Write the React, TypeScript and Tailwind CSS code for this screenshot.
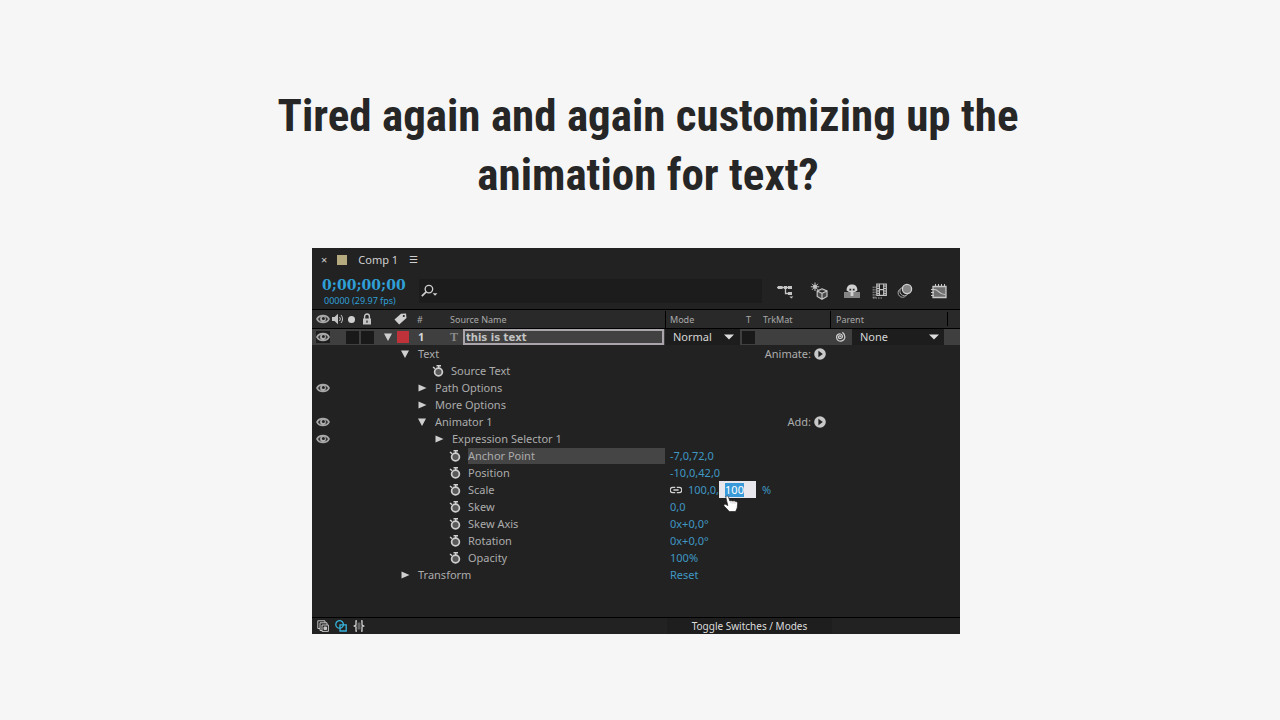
import { ReactNode } from 'react'

type Row = {
  label: string
  labelPad: string
  marker: 'open' | 'closed' | 'watch'
  eye?: boolean
  selected?: boolean
  action?: string
  value?: ReactNode
}

const valueClass = 'text-[#3f97c2] whitespace-pre'

function Value({ children }: { children: ReactNode }) {
  return <button className={valueClass}>{children}</button>
}

const rows: Row[] = [
  { label: 'Text', labelPad: 'pl-[88px]', marker: 'open', action: 'Animate:' },
  { label: 'Source Text', labelPad: 'pl-[121px]', marker: 'watch' },
  { label: 'Path Options', labelPad: 'pl-[105px]', marker: 'closed', eye: true },
  { label: 'More Options', labelPad: 'pl-[105px]', marker: 'closed' },
  { label: 'Animator 1', labelPad: 'pl-[105px]', marker: 'open', eye: true, action: 'Add:' },
  { label: 'Expression Selector 1', labelPad: 'pl-[122px]', marker: 'closed', eye: true },
  { label: 'Anchor Point', labelPad: 'pl-[138px]', marker: 'watch', selected: true, value: <Value>-7,0,72,0</Value> },
  { label: 'Position', labelPad: 'pl-[138px]', marker: 'watch', value: <Value>-10,0,42,0</Value> },
  { label: 'Scale', labelPad: 'pl-[138px]', marker: 'watch', value: <ScaleValue /> },
  { label: 'Skew', labelPad: 'pl-[138px]', marker: 'watch', value: <Value>0,0</Value> },
  { label: 'Skew Axis', labelPad: 'pl-[138px]', marker: 'watch', value: <Value>0x+0,0°</Value> },
  { label: 'Rotation', labelPad: 'pl-[138px]', marker: 'watch', value: <Value>0x+0,0°</Value> },
  { label: 'Opacity', labelPad: 'pl-[138px]', marker: 'watch', value: <Value>100%</Value> },
  { label: 'Transform', labelPad: 'pl-[88px]', marker: 'closed', value: <Value>Reset</Value> },
]

function EyeIcon() {
  return (
    <svg className="w-3.5 h-3 shrink-0" viewBox="0 0 14 12" fill="none">
      <path d="M1 6C3 1.4 11 1.4 13 6C11 10.6 3 10.6 1 6Z" fill="#333" stroke="#a8a8a8" strokeWidth="1.8" />
      <circle cx="7" cy="6" r="2.9" fill="#b0b0b0" />
      <circle cx="7.4" cy="5.4" r="1.5" fill="#222" />
    </svg>
  )
}

function StopwatchIcon() {
  return (
    <svg className="w-3 h-3 shrink-0" viewBox="0 0 12 12" fill="none">
      <circle cx="6.5" cy="7" r="3.9" fill="#5a5a5a" stroke="#cfcfcf" strokeWidth="1.7" />
      <path d="M4.5 .8H9M6.7 .8V3M1 2L3 3.6" stroke="#cfcfcf" strokeWidth="1.4" />
    </svg>
  )
}

function Triangle({ open }: { open?: boolean }) {
  return (
    <svg className="w-2.5 h-2.5 shrink-0" viewBox="0 0 10 10" fill="#cfcfcf">
      <path d={open ? 'M1 1.5H9L5 9Z' : 'M1.5 1.5L9.5 5L1.5 8.5Z'} />
    </svg>
  )
}

function DropArrow() {
  return (
    <svg className="w-2.5 h-1.5 shrink-0 pointer-events-none" viewBox="0 0 10 6" fill="#dcdcdc">
      <path d="M0 .5H10L5 5.5Z" />
    </svg>
  )
}

function PlayIcon() {
  return (
    <svg className="w-3 h-3 shrink-0" viewBox="0 0 12 12">
      <circle cx="6" cy="6" r="5.8" fill="#c8c8c8" />
      <path d="M4.4 2.8L8.8 6L4.4 9.2Z" fill="#222" />
    </svg>
  )
}

function HandCursor() {
  return (
    <svg className="absolute left-1 top-3.5 w-4 h-[18px] z-10 pointer-events-none" viewBox="0 0 16 18">
      <path
        d="M3 1.6C3.6.6 5 .6 5.4 1.8L6.8 6L8 5.4L9.6 6L11.2 5.8L13 6.6C14.2 6.8 14.8 7.6 14.6 9L14.2 13L12.6 16.5H6.2L4.6 14.6L1 11C.4 9.8 1.6 8.6 2.8 9.4L4.8 10.6L3 3Z"
        fill="#fff"
        stroke="#222"
        strokeWidth=".7"
      />
      <path d="M8 6V8.4M10 6.4V8.6M12 6.8V8.8" stroke="#999" strokeWidth=".5" />
    </svg>
  )
}

function ScaleValue() {
  return (
    <div className="flex items-center">
      <svg className="w-3 h-2 mr-1.5" viewBox="0 0 12 8" fill="none" stroke="#d0d0d0" strokeWidth="1.3">
        <path d="M5.2 1.4H2.8A2.2 2.2 0 0 0 2.8 6.6H5.2M6.8 1.4H9.2A2.2 2.2 0 0 1 9.2 6.6H6.8M3.4 4H8.6" />
      </svg>
      <Value>100,0,</Value>
      <div className="relative">
        <div className="flex h-[17px] w-[37px] items-center bg-[#e9e7ee] pl-1.5">
          <input
            aria-label="Scale Y"
            defaultValue="100"
            className="h-3.5 w-[19px] bg-[#3a9ad9] text-white outline-none"
          />
        </div>
        <HandCursor />
      </div>
      <span className="ml-1.5 text-[#3f97c2]">%</span>
    </div>
  )
}

function SearchIcon() {
  return (
    <svg className="w-5 h-4" viewBox="0 0 20 16" fill="none">
      <circle cx="10.5" cy="6" r="4" stroke="#d0d0d0" strokeWidth="1.4" />
      <path d="M7.6 9L3 13.4" stroke="#d0d0d0" strokeWidth="1.8" />
      <path d="M14.5 10.5H19.5L17 13Z" fill="#d0d0d0" />
    </svg>
  )
}

function FlowchartIcon() {
  return (
    <svg className="w-[18px] h-4" viewBox="0 0 18 16" fill="none" stroke="#c4c4c4">
      <path d="M1 4.5H16M9.5 4.5V10.5H15" strokeWidth="1.3" />
      <path d="M2 3H6.5V6H2ZM8 3H11V6H8ZM12 3H16V6H12ZM12 9H16V12H12Z" fill="#c4c4c4" stroke="none" />
      <path d="M13.4 13.4H17.4L15.4 15.6Z" fill="#c4c4c4" stroke="none" />
    </svg>
  )
}

function DraftCubeIcon() {
  return (
    <svg className="w-[18px] h-[18px]" viewBox="0 0 18 18" fill="none" stroke="#c4c4c4">
      <path d="M5 .5V9M.8 4.8H9.2M2 1.8L8 7.8M8 1.8L2 7.8" />
      <circle cx="5" cy="4.8" r="2" fill="#c4c4c4" stroke="none" />
      <path d="M12 6.8L17 9V14.4L12 17.2L7.2 14.4V9ZM7.2 9L12 11.4L17 9M12 11.4V17" fill="#4a4a4a" strokeWidth="1.2" />
    </svg>
  )
}

function ShyIcon() {
  return (
    <svg className="w-4 h-3.5" viewBox="0 0 16 14">
      <path d="M0 8H16V14H0Z" fill="#858585" />
      <path d="M2.6 6.4C2.6 2 5 .4 8 .4S13.4 2 13.4 6.4L11 8H9.4V12H6.6V8H5Z" fill="#d0d0d0" />
      <path d="M5.4 4.8H7.2V6.6H5.4ZM8.8 4.8H10.6V6.6H8.8Z" fill="#222" />
    </svg>
  )
}

function FrameBlendIcon() {
  return (
    <svg className="w-[15px] h-4" viewBox="0 0 15 16" fill="none" stroke="#c4c4c4">
      <path d="M4.8 1H14.3V12.4H4.8ZM7.4 1V12.4M11.7 1V12.4M7.4 6.7H11.7" strokeWidth="1.2" />
      <path d="M5 3H7M5 5.5H7M5 8H7M5 10.4H7M12 3H14M12 5.5H14M12 8H14M12 10.4H14" />
      <path d="M1.2 3.6V15.5M3 3.6V15.5M1 15H10" stroke="#a0a0a0" strokeDasharray="1.5 1" />
    </svg>
  )
}

function MotionBlurIcon() {
  return (
    <svg className="w-4 h-4" viewBox="0 0 16 16" stroke="#a8a8a8">
      <circle cx="5.6" cy="9.8" r="4.5" fill="#222" />
      <circle cx="7.4" cy="8.2" r="4.5" fill="#222" />
      <circle cx="10" cy="6" r="4.6" fill="#858585" stroke="#d0d0d0" strokeWidth="1.3" />
    </svg>
  )
}

function GraphIcon() {
  return (
    <svg className="w-4 h-4" viewBox="0 0 16 16" fill="none" stroke="#c8c8c8">
      <path d="M2 3.5H15V14.5H2Z" fill="#707070" strokeWidth="1.3" />
      <path d="M4.5 1V4M7.5 1V4M10.5 1V4M13.5 1V4M0 6.5H3M0 9.5H3M0 12.5H3" />
      <path d="M3 6.5C8 6.5 8 11.5 14 11.5" strokeWidth="1.2" />
    </svg>
  )
}

function SpeakerIcon() {
  return (
    <svg className="w-3 h-3" viewBox="0 0 12 12" fill="none">
      <path d="M0 4H2.5L6 .8V11.2L2.5 8H0Z" fill="#c4c4c4" />
      <path d="M7.5 4A3 3 0 0 1 7.5 8M9 2A6 6 0 0 1 9 10" stroke="#c4c4c4" />
    </svg>
  )
}

function LockIcon() {
  return (
    <svg className="w-2.5 h-3" viewBox="0 0 10 12" fill="none">
      <path d="M2.6 6V3.4A2.4 2.4 0 0 1 7.4 3.4V6" stroke="#c4c4c4" strokeWidth="1.4" />
      <path d="M1 5.5H9V11.5H1Z" fill="#c4c4c4" />
      <path d="M4.4 7.5H5.6V9.8H4.4Z" fill="#222" />
    </svg>
  )
}

function TagIcon() {
  return (
    <svg className="w-[13px] h-3" viewBox="0 0 13 12">
      <path d="M7 .8L12 .5L12.5 5L5.2 11.6L.5 6.6Z" fill="#d0d0d0" />
      <circle cx="9.8" cy="3" r="1.1" fill="#222" />
    </svg>
  )
}

function PickWhipIcon() {
  return (
    <svg className="w-3 h-3 shrink-0" viewBox="0 0 12 12" fill="none" stroke="#d0d0d0" strokeWidth="1.2">
      <path d="M7 5.8A1.3 1.3 0 1 0 6 7.4C7.8 7.6 8.8 6.2 8.4 4.8C7.8 2.8 5.4 2.4 3.8 3.6C2 5 2.2 8 4.2 9.4C6.4 10.8 9.6 9.8 10.6 7.4C11.2 5.2 10.4 2.8 8.4 1.2" />
    </svg>
  )
}

function Toolbar() {
  return (
    <div className="flex h-[39px] items-center border-b border-black pt-0.5">
      <div className="w-[107px] pt-0.5 pl-2.5 text-[#2f9fd6]">
        <div className="font-['DejaVu_Serif',serif] text-sm leading-4 font-bold">0;00;00;00</div>
        <div className="pl-0.5 text-[9px] leading-[15px]">00000 (29.97 fps)</div>
      </div>
      <label className="flex h-6 flex-1 items-center bg-[#1c1c1c]">
        <SearchIcon />
        <input aria-label="Search layers" className="w-full bg-transparent pl-2 text-gray-300 outline-none" />
      </label>
      <div className="flex w-[198px] items-center pl-3.5">
        <button aria-label="Mini-flowchart" className="mr-4"><FlowchartIcon /></button>
        <button aria-label="Draft 3D" className="mr-4"><DraftCubeIcon /></button>
        <button aria-label="Hide shy layers" className="mr-3"><ShyIcon /></button>
        <button aria-label="Frame blending" className="mr-2.5"><FrameBlendIcon /></button>
        <button aria-label="Motion blur" className="mr-[18px]"><MotionBlurIcon /></button>
        <button aria-label="Graph editor"><GraphIcon /></button>
      </div>
    </div>
  )
}

function ColumnHeader() {
  return (
    <div className="flex h-[19px] items-center border-b border-black bg-[#292929] text-[9px] text-[#a9a9a9]">
      <div className="flex w-[138px] items-center pl-1">
        <EyeIcon />
        <span className="ml-0.5"><SpeakerIcon /></span>
        <span className="ml-1 h-[7px] w-[7px] rounded-full bg-[#d0d0d0]" />
        <span className="ml-[7px]"><LockIcon /></span>
        <span className="ml-[22px]"><TagIcon /></span>
        <span className="ml-2.5">#</span>
      </div>
      <div className="flex-1">Source Name</div>
      <div className="w-[75px] border-l border-black pl-1">Mode</div>
      <div className="w-[18px] pl-1.5">T</div>
      <div className="w-[72px] pl-[5px]">TrkMat</div>
      <div className="w-[117px] border-l border-black pl-[5px]">Parent</div>
      <div className="h-3.5 w-[13px] border-l border-black" />
    </div>
  )
}

function LayerRow() {
  return (
    <div className="flex h-4 items-center bg-[#3f3f3f] leading-4 text-[#d6d6d6]">
      <div className="flex h-full w-[138px] items-center pl-1">
        <span className="flex bg-[#1d1d1d]"><EyeIcon /></span>
        <span className="ml-4 h-[13px] w-[13px] bg-[#191919]" />
        <span className="ml-0.5 h-[13px] w-[13px] bg-[#191919]" />
        <span className="ml-[9px] flex"><Triangle open /></span>
        <span className="ml-1 h-3 w-3 bg-[#c0323a]" />
        <span className="ml-[9px] font-bold">1</span>
      </div>
      <span className="w-[13px] font-['Liberation_Serif',serif] text-xs font-bold text-[#8c8c8c]">T</span>
      <input
        aria-label="Layer name"
        defaultValue="this is text"
        className="h-4 min-w-0 flex-1 border-2 border-[#aaa5aa] bg-[#414141] px-px font-['DejaVu_Sans',sans-serif] text-[10px] leading-3 font-bold text-[#c4c4c4] outline-none"
      />
      <div className="ml-px flex h-full w-[75px] items-center bg-[#1d1d1d] pr-1.5">
        <select aria-label="Mode" className="min-w-0 flex-1 appearance-none pl-2 outline-none">
          <option>Normal</option>
        </select>
        <DropArrow />
      </div>
      <div className="flex w-[18px] pl-0.5">
        <span className="h-[13px] w-[13px] bg-[#191919]" />
      </div>
      <div className="w-[72px]" />
      <div className="flex h-full w-[114px] items-center">
        <span className="flex w-[22px] pl-1"><PickWhipIcon /></span>
        <div className="flex h-full flex-1 items-center bg-[#1d1d1d] pr-[5px]">
          <select aria-label="Parent" className="min-w-0 flex-1 appearance-none pl-2 outline-none">
            <option>None</option>
          </select>
          <DropArrow />
        </div>
      </div>
      <div className="w-4" />
    </div>
  )
}

function PropertyRow({ row }: { row: Row }) {
  const watch = row.marker === 'watch'
  return (
    <div className="flex h-[17px] items-center">
      <div className="flex w-[18px] pl-1">{row.eye && <EyeIcon />}</div>
      <div className={`flex h-full flex-1 items-center ${row.labelPad}`}>
        {/* the marker hangs in the indent, left of the label */}
        <span className={`flex shrink-0 ${watch ? '-ml-[19px] w-[19px]' : '-ml-[18px] w-[18px]'}`}>
          {watch ? <StopwatchIcon /> : <Triangle open={row.marker === 'open'} />}
        </span>
        <span className={row.selected ? 'flex-1 bg-[#454545] leading-4' : ''}>{row.label}</span>
      </div>
      <div className="w-[295px] pl-[5px]">
        {row.value}
        {row.action && (
          <button className="flex w-[156px] items-center justify-end gap-[3px]">
            {row.action}
            <PlayIcon />
          </button>
        )}
      </div>
    </div>
  )
}

function Footer() {
  return (
    <footer className="flex h-[17px] items-center border-t border-black text-[10px] leading-4 text-[#dcdcdc]">
      <div className="flex flex-1 items-center gap-1.5 pl-[5px]">
        <button aria-label="Layer switches">
          <svg className="w-3 h-3" viewBox="0 0 12 12" fill="none" stroke="#c4c4c4">
            <path d="M3 8.5H.8V.8H8V3M5 10.5H3V2.8H10V5" />
            <path d="M5 5H11.4V11.4H5Z" fill="#222" />
            <path d="M7 7H9.5V9.5H7Z" fill="#c4c4c4" />
          </svg>
        </button>
        <button aria-label="Transfer controls">
          <svg className="w-3 h-3" viewBox="0 0 12 12" fill="none" stroke="#37b3dd" strokeWidth="1.3">
            <circle cx="4.6" cy="4.4" r="3.8" />
            <path d="M5 4.8H11.2V11H5Z" />
          </svg>
        </button>
        <button aria-label="In and out columns">
          <svg className="w-3 h-3" viewBox="0 0 12 12" fill="none" stroke="#d0d0d0" strokeWidth="1.3">
            <path d="M4 .8H3V5L1.2 6L3 7V11.2H4M8 .8H9V5L10.8 6L9 7V11.2H8" />
            <path d="M4.5 2.5H7.5V9.5H4.5Z" fill="#666" stroke="none" />
          </svg>
        </button>
      </div>
      <button className="h-full w-[165px] bg-[#1e1e1e]">Toggle Switches / Modes</button>
      <div className="w-32" />
    </footer>
  )
}

export default function App() {
  return (
    <main className="flex min-h-screen flex-col items-center bg-[#f6f6f6] pt-[86px] pr-2 pb-[86px]">
      <h1 className="pl-6 text-center font-['Roboto_Condensed','Roboto',sans-serif] text-[45px] leading-[59px] font-bold text-[#262626]">
        Tired again and again customizing up the
        <br />
        animation for text?
      </h1>
      <section className="mt-11 w-full max-w-[648px] bg-[#222] font-['Noto_Sans',sans-serif] text-[11px] leading-[17px] text-[#acacac]">
        <div className="flex h-[23px] items-center pl-[9px] text-[#d0d0d0]">
          <button aria-label="Close tab">×</button>
          <span className="ml-2.5 h-2.5 w-2.5 bg-[#b5ab7e]" />
          <span className="ml-[11px]">Comp 1</span>
          <button className="ml-[11px] text-[10px]" aria-label="Panel menu">☰</button>
        </div>
        <Toolbar />
        <ColumnHeader />
        <LayerRow />
        <div className="pb-[34px]">
          {rows.map((row) => (
            <PropertyRow key={row.label} row={row} />
          ))}
        </div>
        <Footer />
      </section>
    </main>
  )
}
